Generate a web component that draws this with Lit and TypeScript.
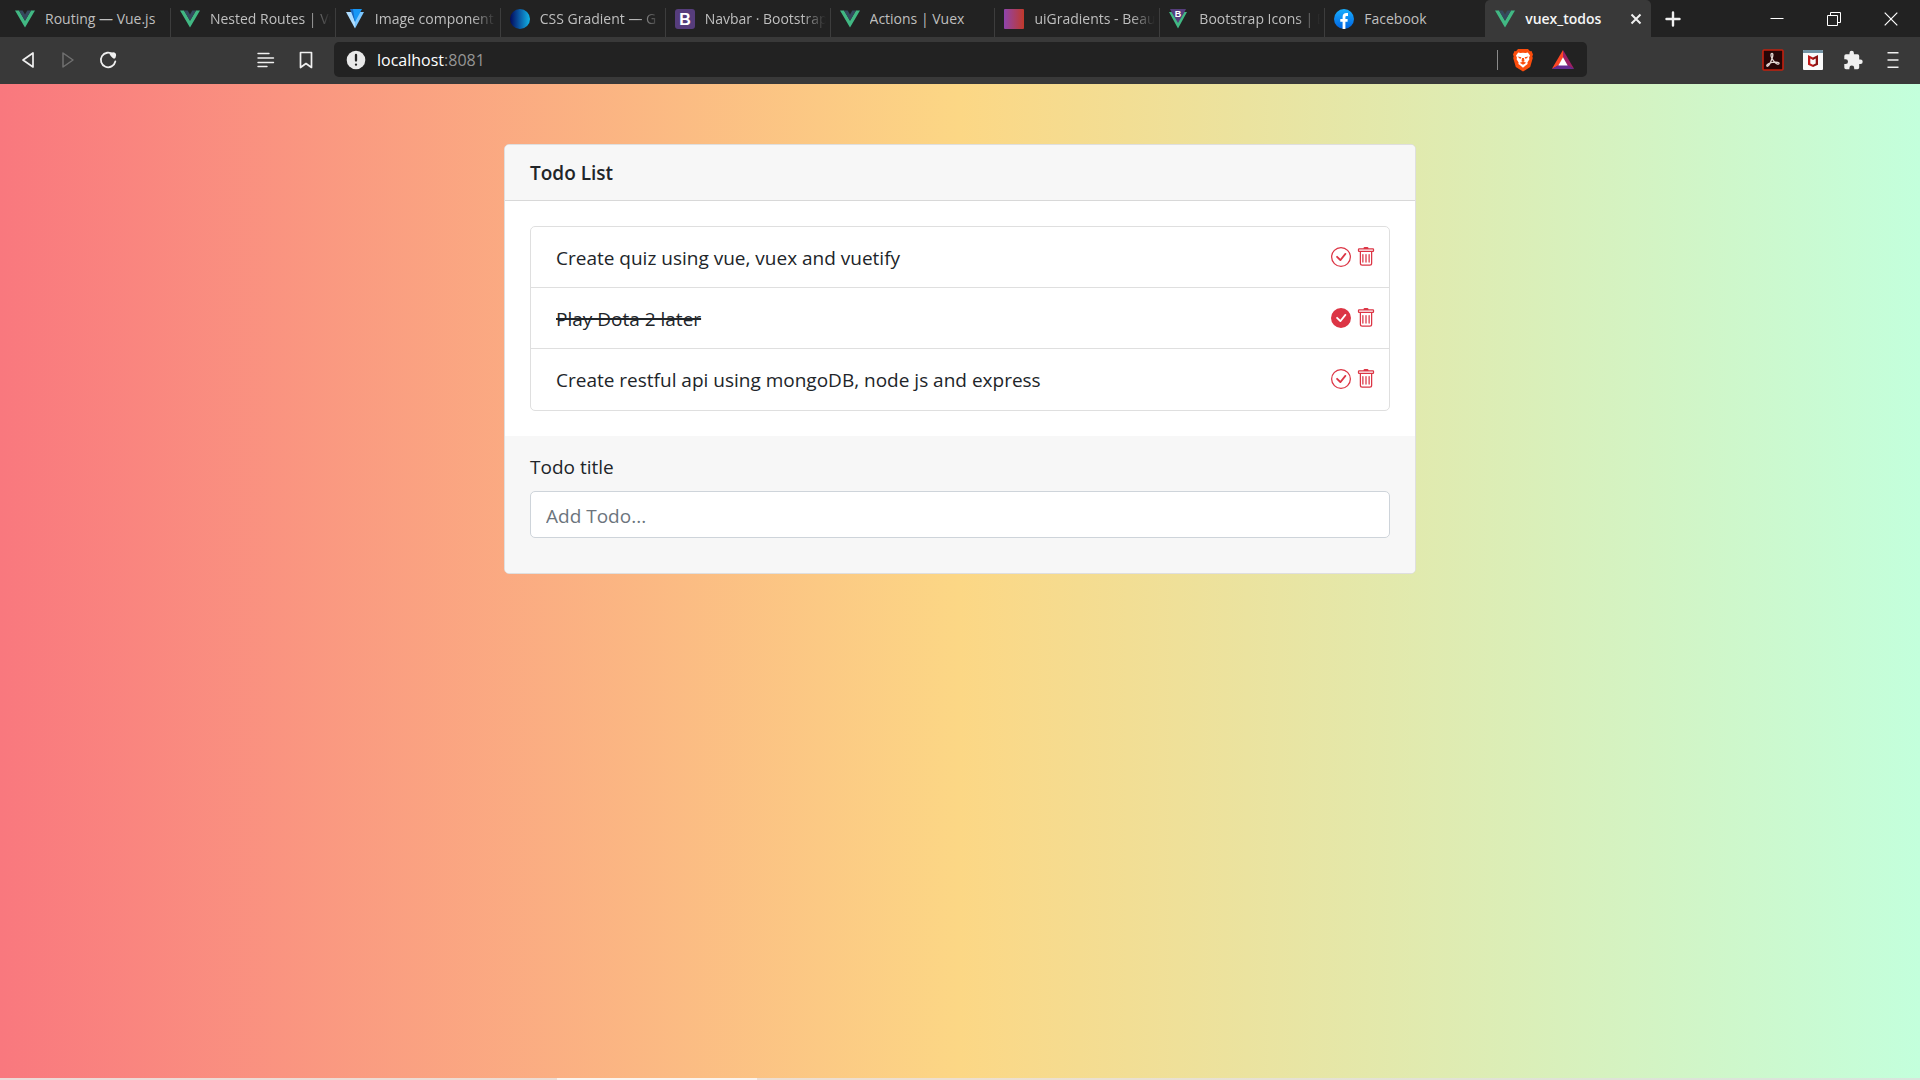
import { LitElement, html, svg, css, nothing, TemplateResult } from "lit";
import { customElement, property, state } from "lit/decorators.js";
import { classMap } from "lit/directives/class-map.js";

const vueLogo = svg`
  <path fill="#41b883" d="M0 1.5h4L10 11.800 16 1.500h4L10 18.500z"/>
  <path fill="#34495e" d="M4 1.500h3.700L10 5.400l2.300-3.900H16L10 11.800z"/>`;

const favicons: Record<string, TemplateResult> = {
  vue: vueLogo,
  vuetify: svg`
    <path fill="#aeddff" d="M1 3h6l3 9v7.500z"/>
    <path fill="#7bc6ff" d="M19 3h-6l-3 9v7.500z"/>
    <path fill="#1867c0" d="M5 0h7l-2 13z"/>
    <path fill="#1697f6" d="M8 0h9l-7 13z"/>`,
  gradient: svg`
    <defs><linearGradient id="g"><stop offset="0" stop-color="#020a5c"/><stop offset=".45" stop-color="#0a55a0"/><stop offset="1" stop-color="#12b4e6"/></linearGradient></defs>
    <circle cx="10" cy="10" r="10" fill="url(#g)"/>`,
  bootstrap: svg`
    <rect width="20" height="20" rx="3" fill="#563d7c"/>
    <text x="10" y="16" text-anchor="middle" font-family="Liberation Sans, sans-serif" font-weight="700" font-size="16" fill="#fff">B</text>`,
  ui: svg`
    <defs><linearGradient id="g"><stop offset="0" stop-color="#8e44ad"/><stop offset="1" stop-color="#c0392b"/></linearGradient></defs>
    <rect width="20" height="20" rx="1" fill="url(#g)"/>`,
  bootstrapVue: svg`
    <path fill="#41b883" d="M0 3h4l5 9.500L14 3h4L9 19.500z"/>
    <path fill="#563d7c" d="M1 0h16l-2 4-6 10L3 4z"/>
    <text x="9" y="8" text-anchor="middle" font-family="Liberation Sans, sans-serif" font-weight="700" font-size="9" fill="#fff">B</text>`,
  facebook: svg`
    <defs><linearGradient id="g" x2="0" y2="1"><stop offset="0" stop-color="#19afff"/><stop offset="1" stop-color="#0062e0"/></linearGradient></defs>
    <circle cx="10" cy="10" r="10" fill="url(#g)"/>
    <path fill="none" stroke="#fff" stroke-width="2.800" d="M14 5.500h-1.500Q10 5.500 10 8v12M6.300 11.400h7.300"/>`,
};

const icons: Record<string, { size: number; body: TemplateResult }> = {
  back: { size: 20, body: svg`<path fill="none" stroke="#f0f0f0" stroke-width="1.700" stroke-linejoin="round" d="M15 3v14L5 10z"/>` },
  forward: { size: 20, body: svg`<path fill="none" stroke="#707070" stroke-width="1.500" stroke-linejoin="round" d="M5 3v14l10-7z"/>` },
  reload: { size: 20, body: svg`
    <path fill="none" stroke="#f0f0f0" stroke-width="1.800" stroke-linecap="round" d="M15 4.500A7.300 7.300 0 1 0 17.300 11.500"/>
    <path fill="#f0f0f0" d="M11.500 4q2.200-2.300 5-1.500 2 .800 1.600 3-.200 2.600-2 3.200-2-.300-4.600-4.700z"/>` },
  reader: { size: 20, body: svg`<path stroke="#f0f0f0" stroke-width="1.400" stroke-linecap="round" d="M2 3.500h11M2 8h15.500M2 12.500h15.500M2 16.500h9"/>` },
  bookmark: { size: 20, body: svg`<path fill="none" stroke="#f0f0f0" stroke-width="1.700" stroke-linejoin="round" d="M4.500 2.500h11v15L10 13.500l-5.500 4z"/>` },
  info: { size: 20, body: svg`<circle cx="10" cy="10" r="9.300" fill="#e8e8e8"/><path stroke="#222" stroke-width="2.300" stroke-linecap="round" d="M10 5v5.500M10 14.600v.100"/>` },
  close: { size: 12, body: svg`<path stroke="#f0f0f0" stroke-width="2" d="M1.500 1.500l9 9M10.500 1.500l-9 9"/>` },
  plus: { size: 16, body: svg`<path stroke="#f0f0f0" stroke-width="2.400" stroke-linecap="round" d="M8 1.500v13M1.500 8h13"/>` },
  minimize: { size: 14, body: svg`<path stroke="#fff" stroke-width="1" d="M.500 6.500h13"/>` },
  restore: { size: 14, body: svg`<path fill="none" stroke="#fff" d="M.500 3.500h10v10H.500zM3.500 3.500v-3h10v10h-3"/>` },
  exit: { size: 14, body: svg`<path stroke="#fff" stroke-width="1.200" d="M.700.700l12.600 12.600M13.300.700L.700 13.300"/>` },
  shield: { size: 24, body: svg`
    <path fill="#fb4d0d" d="M7 1h10l2 2.200 1.500-.200L22 6.500l-.700 2 .500 1.500-2.600 9-7.200 4.500L4.800 19 2.200 10l.500-1.500-.700-2L3.500 3l1.500.200z"/>
    <path fill="#fff" d="M12 4.800l2.600.200 2.200-.500 2.200 3-1 2.200.400 1.600-2 3.200.200 1.600-2 1.300-2.600 2.300-2.600-2.300-2-1.300.200-1.600-2-3.200.400-1.600-1-2.200 2.200-3 2.200.500z"/>
    <path fill="#fb4d0d" d="M6.500 8.500l4 .800-1.300 1.700zM17.500 8.500l-4 .800 1.300 1.700zM11 10h2l.500 3.200-1.500.900-1.500-.900zM8.700 14.700l3.300-.900 3.300.900-3.300 2z"/>` },
  bat: { size: 24, body: svg`
    <path fill="#ff4724" d="M12 2v8l-4.500 7.500L.800 21z"/>
    <path fill="#9e1f63" d="M12 2v8l4.500 7.500 6.700 3.500z"/>
    <path fill="#662d91" d="M.800 21l6.700-4h9l6.700 4z"/>
    <path fill="#fff" d="M12 9.200l4.700 8.300H7.300z"/>` },
  acrobat: { size: 22, body: svg`
    <rect x="1" y="1" width="20" height="20" rx="1" fill="#260506" stroke="#c2200e" stroke-width="1.600"/>
    <path fill="none" stroke="#e3d6d2" stroke-width="1.300" stroke-linejoin="round" d="M10 9.500c-1.600-3-1.200-5 0-5s1.100 2 0 5c-1 3-2.600 6.500-4 7.500-1 .700-1.800-.300-.800-1.300 1.200-1.200 4.500-2.300 7.300-2.600 2.500-.200 4.800.200 4.500 1.400-.400 1.200-2.400.600-4-1-1.300-1.200-2.200-2.500-3-4z"/>` },
  mcafee: { size: 22, body: svg`
    <rect x="1" y="1" width="20" height="20" rx="1" fill="#fafafa"/>
    <path fill="#7494a5" d="M1 2q0-1 1-1h18q1 0 1 1v2H1z"/>
    <path fill="#c01818" d="M6 6l5 2.400V11L8.300 9.600v5L11 15.800V18l-5-2.300z"/>
    <path fill="#8e1212" d="M16 6l-5 2.400V11l2.700-1.400v5L11 15.800V18l5-2.300z"/>` },
  puzzle: { size: 22, body: svg`<path fill="#f0f0f0" d="M18.500 10.600H17.200V7a1.700 1.700 0 0 0-1.700-1.700h-3.600V4a2.200 2.200 0 0 0-4.400 0v1.300H4A1.700 1.700 0 0 0 2.300 7v3.300h1.300a2.400 2.400 0 0 1 0 4.800H2.300v3.400A1.700 1.700 0 0 0 4 20.200h3.400v-1.300a2.400 2.400 0 0 1 4.800 0v1.300h3.300a1.700 1.700 0 0 0 1.700-1.700V15h1.300a2.200 2.200 0 0 0 0-4.400z"/>` },
  menu: { size: 20, body: svg`<path stroke="#f0f0f0" stroke-width="1.600" d="M4.500 2.700h11M4.500 10h11M4.500 17.300h11"/>` },
};

const icon = (name: string) => {
  const { size, body } = icons[name];
  return html`<svg width=${size} height=${size} viewBox="0 0 ${size} ${size}" aria-hidden="true">${body}</svg>`;
};

const tabs = [
  { mark: "vue", title: "Routing — Vue.js" },
  { mark: "vue", title: "Nested Routes | Vu", faded: true },
  { mark: "vuetify", title: "Image component", faded: true },
  { mark: "gradient", title: "CSS Gradient — G", faded: true },
  { mark: "bootstrap", title: "Navbar · Bootstrap", faded: true },
  { mark: "vue", title: "Actions | Vuex" },
  { mark: "ui", title: "uiGradients - Beau", faded: true },
  { mark: "bootstrapVue", title: "Bootstrap Icons | B", faded: true },
  { mark: "facebook", title: "Facebook" },
  { mark: "vue", title: "vuex_todos", active: true },
];

@customElement("browser-tab")
class BrowserTab extends LitElement {
  @property() mark = "vue";
  @property() label = "";
  @property({ type: Boolean }) faded = false;
  @property({ type: Boolean, reflect: true }) active = false;

  static styles = css`
    :host {
      display: flex;
      flex: 1 1 0;
      min-width: 0;
      align-items: center;
      box-sizing: border-box;
      padding: 0 4px 0 9px;
      border-right: 1px solid transparent;
      border-image: linear-gradient(transparent 9px, #3d3d3d 9px) 1;
      color: #bfbfbf;
      font: 14px/20px "Open Sans", "Noto Sans", sans-serif;
    }
    :host([active]) {
      margin-left: -5px;
      padding-left: 10px;
      background: #393939;
      border-image: none;
      border-radius: 5px 5px 0 0;
      color: #f5f5f5;
      font-weight: 600;
    }
    svg { flex: none; }
    .title {
      flex: 1;
      min-width: 0;
      margin-left: 10px;
      overflow: hidden;
      white-space: nowrap;
    }
    .faded { mask-image: linear-gradient(to left, transparent, #000 24px); }
    .close {
      display: flex;
      padding: 4px;
      border: 0;
      background: none;
    }
  `;

  render() {
    return html`
      <svg width="20" height="20" viewBox="0 0 20 20" aria-hidden="true">${favicons[this.mark]}</svg>
      <span class=${classMap({ title: true, faded: this.faded })}>${this.label}</span>
      ${this.active ? html`<button class="close" aria-label="Close tab">${icon("close")}</button>` : nothing}
    `;
  }
}

@customElement("browser-chrome")
class BrowserChrome extends LitElement {
  static styles = css`
    :host {
      display: block;
      background: #393939;
      font-family: "Open Sans", "Noto Sans", sans-serif;
    }
    button {
      display: flex;
      align-items: center;
      justify-content: center;
      width: 40px;
      height: 35px;
      padding: 0;
      border: 0;
      background: none;
    }
    .strip {
      display: flex;
      height: 37px;
      padding: 0 1px 0 6px;
      background: #222;
    }
    .tabs {
      display: flex;
      flex: 0 1 1645px;
      min-width: 0;
      margin-right: 2px;
    }
    .strip button { height: 37px; }
    .window {
      display: flex;
      margin-left: auto;
    }
    .window button { width: 57px; }
    .toolbar {
      display: flex;
      align-items: center;
      height: 47px;
      padding: 0 7px 2px 8px;
      box-sizing: border-box;
    }
    .group { display: flex; }
    .space-start { flex: 0 1 118px; }
    .space-end { flex: 0 1 166px; }
    .address {
      display: flex;
      flex: 1;
      align-items: center;
      height: 35px;
      margin-left: 8px;
      padding: 0 4px 0 12px;
      border-radius: 5px;
      background: #222;
      color: #959595;
      font-size: 16px;
    }
    .url {
      flex: 1;
      margin-left: 11px;
    }
    .host { color: #fff; }
    .divider {
      width: 1px;
      height: 20px;
      margin-right: 5px;
      background: #8a8a8a;
    }
  `;

  private button(name: string, label: string) {
    return html`<button aria-label=${label}>${icon(name)}</button>`;
  }

  render() {
    return html`
      <div class="strip">
        <div class="tabs">
          ${tabs.map((t) => html`<browser-tab .mark=${t.mark} .label=${t.title} .faded=${!!t.faded} ?active=${t.active}></browser-tab>`)}
        </div>
        ${this.button("plus", "New tab")}
        <div class="window">
          ${this.button("minimize", "Minimize")} ${this.button("restore", "Restore")} ${this.button("exit", "Close")}
        </div>
      </div>
      <div class="toolbar">
        <div class="group">
          ${this.button("back", "Back")} ${this.button("forward", "Forward")} ${this.button("reload", "Reload")}
        </div>
        <div class="space-start"></div>
        <div class="group">${this.button("reader", "Reading list")} ${this.button("bookmark", "Bookmark")}</div>
        <div class="address">
          ${icon("info")}
          <span class="url"><span class="host">localhost</span>:8081</span>
          <span class="divider"></span>
          ${this.button("shield", "Shields")} ${this.button("bat", "Rewards")}
        </div>
        <div class="space-end"></div>
        <div class="group">
          ${this.button("acrobat", "Acrobat")} ${this.button("mcafee", "WebAdvisor")}
          ${this.button("puzzle", "Extensions")} ${this.button("menu", "Menu")}
        </div>
      </div>
    `;
  }
}

interface Todo {
  title: string;
  done: boolean;
}

const check = svg`<circle cx="8" cy="8" r="7.500" fill="none" stroke="currentColor"/><path d="M10.970 4.970a.235.235 0 0 0-.020.022L7.477 9.417 5.384 7.323a.750.750 0 0 0-1.060 1.060L6.970 11.030a.750.750 0 0 0 1.079-.020l3.992-4.990a.750.750 0 0 0-1.071-1.050z"/>`;
const checkFill = svg`<path d="M16 8A8 8 0 1 1 0 8a8 8 0 0 1 16 0zm-3.970-3.030a.750.750 0 0 0-1.080.022L7.477 9.417 5.384 7.323a.750.750 0 0 0-1.060 1.060L6.970 11.030a.750.750 0 0 0 1.079-.020l3.992-4.990a.750.750 0 0 0-.010-1.050z"/>`;
const trash = svg`<path d="M5.500 5.500A.500.500 0 0 1 6 6v6a.500.500 0 0 1-1 0V6a.500.500 0 0 1 .500-.500zm2.500 0a.500.500 0 0 1 .500.500v6a.500.500 0 0 1-1 0V6a.500.500 0 0 1 .500-.500zm3 .500a.500.500 0 0 0-1 0v6a.500.500 0 0 0 1 0V6z"/><path fill-rule="evenodd" d="M14.500 3a1 1 0 0 1-1 1H13v9a2 2 0 0 1-2 2H5a2 2 0 0 1-2-2V4h-.500a1 1 0 0 1-1-1V2a1 1 0 0 1 1-1H6a1 1 0 0 1 1-1h2a1 1 0 0 1 1 1h3.500a1 1 0 0 1 1 1v1zM4.118 4L4 4.059V13a1 1 0 0 0 1 1h6a1 1 0 0 0 1-1V4.059L11.882 4H4.118zM2.500 3V2h11v1h-11z"/>`;

@customElement("todo-card")
class TodoCard extends LitElement {
  @state() private todos: Todo[] = [
    { title: "Create quiz using vue, vuex and vuetify", done: false },
    { title: "Play Dota 2 later", done: true },
    { title: "Create restful api using mongoDB, node js and express", done: false },
  ];

  static styles = css`
    :host {
      display: block;
      box-sizing: border-box;
      width: 100%;
      max-width: 912px;
      border: 1px solid #dfdfdf;
      border-radius: 5px;
      overflow: hidden;
      background: #fff;
      background-clip: padding-box;
      color: #212529;
      font: 19px/30px "Open Sans", "Noto Sans", sans-serif;
    }
    h1 {
      margin: 0;
      padding: 13px 25px 12px;
      border-bottom: 1px solid #d8d8d8;
      background: #f7f7f7;
      font-size: 19px;
      font-weight: 600;
      line-height: 30px;
    }
    .body { padding: 25px; }
    ul {
      margin: 0;
      padding: 0 0 1px;
      border: 1px solid #dfdfdf;
      border-radius: 5px;
      list-style: none;
    }
    li {
      display: flex;
      align-items: flex-start;
      padding: 16px 13px 14px 25px;
    }
    li + li { border-top: 1px solid #dfdfdf; }
    .title { flex: 1; }
    .done .title { text-decoration: line-through 2px; }
    .actions {
      display: flex;
      gap: 5px;
      padding-top: 4px;
    }
    button {
      display: flex;
      padding: 0;
      border: 0;
      background: none;
      color: #dc3545;
      cursor: pointer;
    }
    form {
      padding: 16px 25px 35px;
      background: #f7f7f7;
    }
    label {
      display: block;
      margin-bottom: 9px;
    }
    input {
      display: block;
      box-sizing: border-box;
      width: 100%;
      height: 47px;
      padding: 2px 15px 0;
      border: 1px solid #ced4da;
      border-radius: 5px;
      background: #fff;
      color: #495057;
      font: inherit;
    }
    input::placeholder {
      color: #6c757d;
      opacity: 1;
    }
  `;

  private toggle(todo: Todo) {
    this.todos = this.todos.map((t) => (t === todo ? { ...t, done: !t.done } : t));
  }

  private remove(todo: Todo) {
    this.todos = this.todos.filter((t) => t !== todo);
  }

  private add(event: Event) {
    event.preventDefault();
    const input = this.renderRoot.querySelector("input")!;
    const title = input.value.trim();
    if (title) this.todos = [...this.todos, { title, done: false }];
    input.value = "";
  }

  private glyph(shape: TemplateResult) {
    return html`<svg width="20" height="20" viewBox="0 0 16 16" fill="currentColor" aria-hidden="true">${shape}</svg>`;
  }

  render() {
    return html`
      <h1>Todo List</h1>
      <div class="body">
        <ul>
          ${this.todos.map(
            (t) => html`
              <li class=${classMap({ done: t.done })}>
                <div class="title">${t.title}</div>
                <div class="actions">
                  <button aria-label="Toggle done" @click=${() => this.toggle(t)}>${this.glyph(t.done ? checkFill : check)}</button>
                  <button aria-label="Delete" @click=${() => this.remove(t)}>${this.glyph(trash)}</button>
                </div>
              </li>
            `
          )}
        </ul>
      </div>
      <form @submit=${this.add}>
        <label for="todo">Todo title</label>
        <input id="todo" type="text" placeholder="Add Todo..." autocomplete="off" />
      </form>
    `;
  }
}

@customElement("app-root")
class AppRoot extends LitElement {
  static styles = css`
    :host {
      display: flex;
      flex-direction: column;
      min-height: 100vh;
    }
    main {
      display: flex;
      flex: 1;
      align-items: flex-start;
      justify-content: center;
      padding: 60px 16px;
      background: linear-gradient(to right, #f9787e, #fcd785 50%, #c3ffdc);
    }
    .edge {
      height: 2px;
      background: linear-gradient(to right, #eddad8, #eddfd0 50%, #d8e5dc);
    }
    .edge-active {
      width: 200px;
      height: 2px;
      margin-left: 29%;
      background: #fbf4ee;
    }
  `;

  render() {
    return html`
      <browser-chrome></browser-chrome>
      <main><todo-card></todo-card></main>
      <div class="edge"><div class="edge-active"></div></div>
    `;
  }
}
